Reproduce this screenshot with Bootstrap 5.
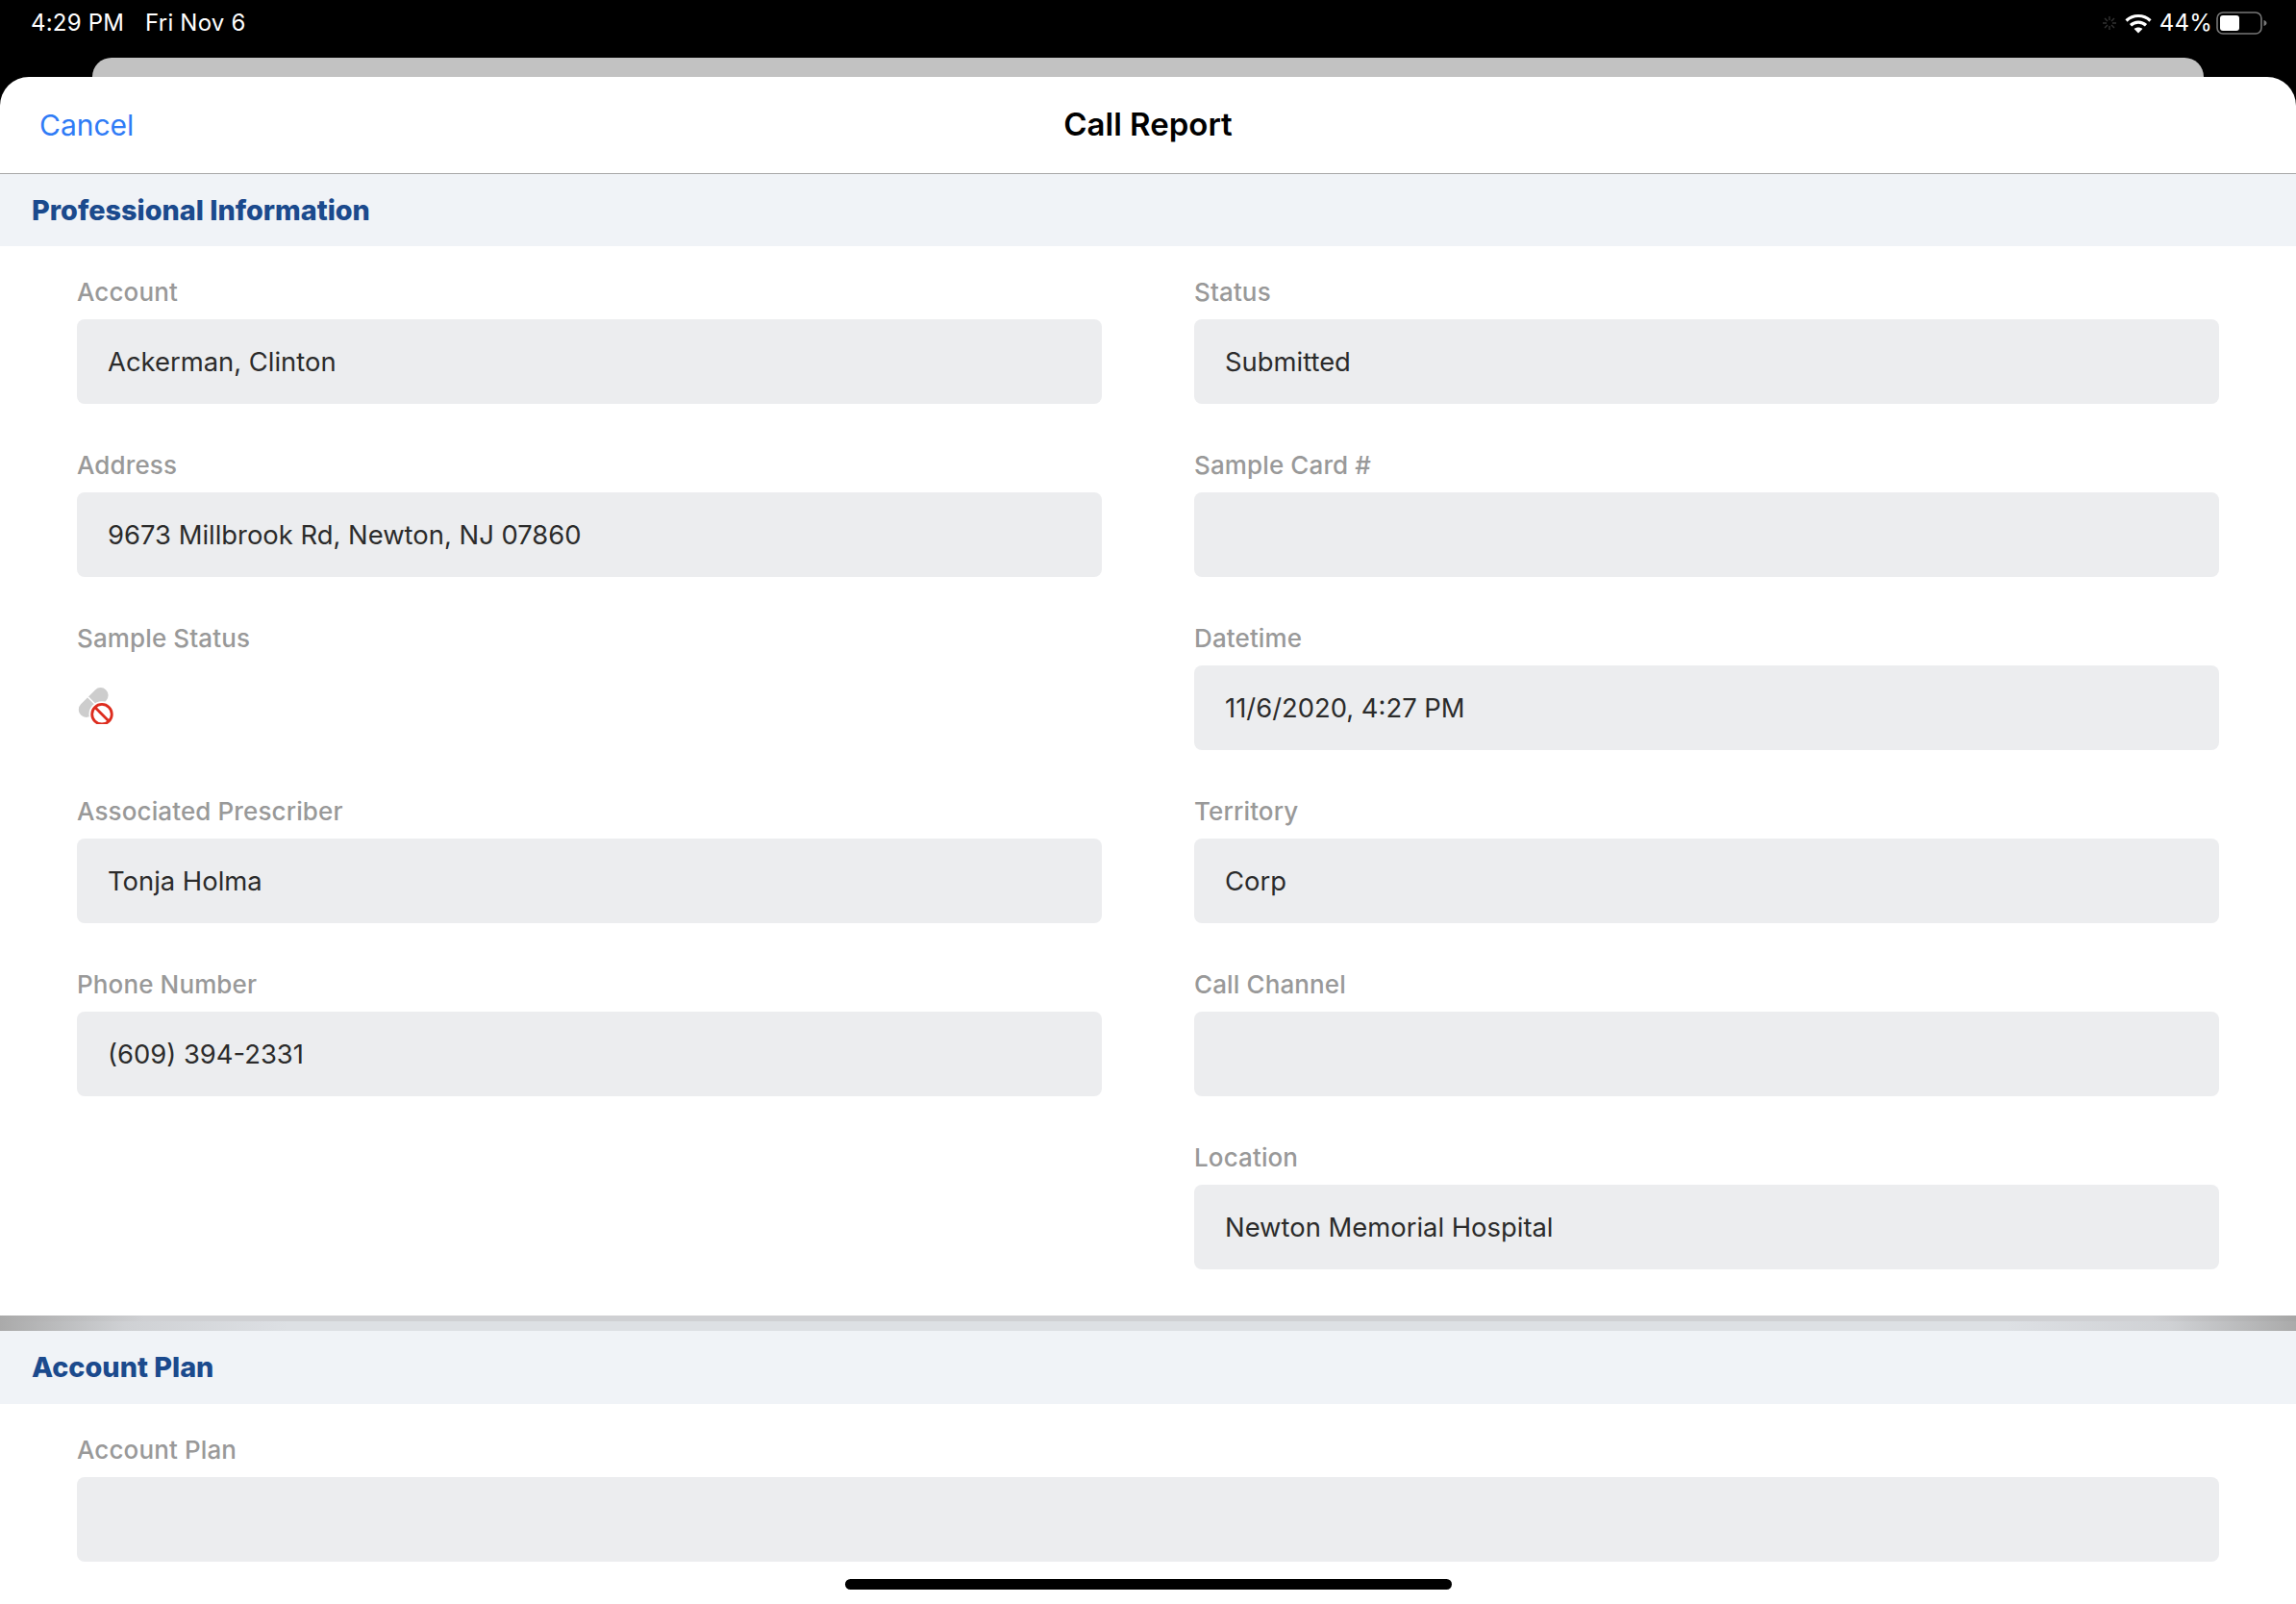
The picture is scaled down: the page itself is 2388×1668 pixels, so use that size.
<!DOCTYPE html>
<html lang="en">
<head>
    <meta charset="UTF-8">
    <meta name="viewport" content="width=device-width, initial-scale=1.0">
    <title>Call Report</title>
    <link href="https://cdn.jsdelivr.net/npm/bootstrap@5.3.2/dist/css/bootstrap.min.css" rel="stylesheet">
    <style>
        html, body { height: 100%; }
        body { background: #000; font-family: Inter, "Liberation Sans", sans-serif; overflow: hidden; position: relative; }
        .status-strip { height: 60px; padding: 0 30px 12px 32px; color: #fff; font-size: 24px; letter-spacing: .2px; }
        .status-strip .clock { margin-right: 22px; }
        .battery-icon { margin-left: 4px; }
        .back-sheet { height: 20px; margin: 0 96px; background: #c2c2c2; border-radius: 20px 20px 0 0; }
        .sheet { background: #fff; border-radius: 30px 30px 0 0; height: 1588px; }
        .sheet-nav { height: 101px; border-bottom: 1px solid #a8a8a8; padding: 0 41px; }
        .sheet-nav .side { flex: 1 1 0; }
        .cancel-link { color: #2f7bf6; font-size: 30px; text-decoration: none; }
        .sheet-title { font-size: 33px; font-weight: 600; color: #000; margin: 0; }
        .sect-head { height: 75px; background: #f0f3f7; color: #1b4a8d; font-size: 28.8px; font-weight: 800; padding-left: 33px; }
        .sect-head.second { height: 76px; }
        .sect-body { padding: 29px 80px 0; }
        .sect-body.first-body { padding-bottom: 3px; }
        .sect-body .row { --bs-gutter-x: 96px; --bs-gutter-y: 0; }
        .info-item { height: 180px; }
        .info-label { display: block; height: 36px; line-height: 37px; margin-bottom: 11px; color: #999; font-size: 26px; font-weight: 500; letter-spacing: .12px; }
        .info-value { height: 88px; padding: 2px 32px 0; border: 0; border-radius: 8px; background: #ecedef; color: #2b2b2b; font-size: 27.4px; line-height: 1; }
        .pill-icon { display: block; width: 40px; height: 40px; margin-top: 32px; }
        .sect-rule { height: 16px; background: linear-gradient(to right, #aaa 0, #cfd1d4 130px, #dde0e4 300px, #dde0e4 2088px, #cfd1d4 2258px, #aaa 100%); }
        .sect-rule::before { content: ""; display: block; height: 6px; background: linear-gradient(to right, #aaa 0, #cfd0d3 150px, #cfd0d3 2238px, #a6a6a6 100%); }
        .home-bar { position: absolute; left: 879px; bottom: 15px; width: 631px; height: 11px; background: #000; border-radius: 6px; }
    </style>
</head>
<body>
    <div class="status-strip d-flex align-items-center justify-content-between">
        <div><span class="clock">4:29 PM</span><span>Fri Nov 6</span></div>
        <div class="d-flex align-items-center">
            <svg width="16" height="16" viewBox="0 0 16 16" class="me-2" stroke="#333" stroke-width="1.4">
                <path d="M8 1v4M8 11v4M1 8h4M11 8h4M3 3l3 3M10 10l3 3M13 3l-3 3M6 10l-3 3"/>
            </svg>
            <svg width="28" height="21" viewBox="0 0 28 21" fill="none" stroke="#fff" stroke-width="3.2" class="me-2">
                <path d="M1.500 7.500C8.500 .8 19.500 .8 26.500 7.500"/>
                <path d="M6 12.200c4.600-4.200 11.400-4.200 16 0"/>
                <path d="M14 20.500l-4.400-4.600c2.600-2 6.200-2 8.800 0z" fill="#fff" stroke="none"/>
            </svg>
            <span>44%</span>
            <svg class="battery-icon" width="53" height="24" viewBox="0 0 53 24">
                <rect x="1" y="1" width="46" height="22" rx="6" fill="none" stroke="#777" stroke-width="1.6"/>
                <rect x="4" y="4" width="20" height="16" rx="3" fill="#fff"/>
                <path d="M49.500 9c2 .6 3 1.600 3 3s-1 2.400-3 3z" fill="#777"/>
            </svg>
        </div>
    </div>
    <div class="back-sheet"></div>

    <div class="sheet overflow-hidden">
        <div class="sheet-nav d-flex align-items-center">
            <div class="side"><a href="#" class="cancel-link">Cancel</a></div>
            <h1 class="sheet-title">Call Report</h1>
            <div class="side"></div>
        </div>

        <div class="sect-head d-flex align-items-center">Professional Information</div>
        <div class="sect-body first-body">
            <div class="row">
                <div class="col-6">
                    <div class="info-item">
                        <label class="info-label">Account</label>
                        <div class="info-value d-flex align-items-center">Ackerman, Clinton</div>
                    </div>
                    <div class="info-item">
                        <label class="info-label">Address</label>
                        <div class="info-value d-flex align-items-center">9673 Millbrook Rd, Newton, NJ 07860</div>
                    </div>
                    <div class="info-item">
                        <label class="info-label">Sample Status</label>
                        <svg class="pill-icon" viewBox="0 0 40 40">
                            <g transform="rotate(-45 17.200 17.500)">
                                <rect x="-1.300" y="9.500" width="37" height="16" rx="8" fill="#cdcdcd"/>
                                <rect x="16.400" y="9" width="1.600" height="17" fill="#fff"/>
                            </g>
                            <circle cx="26" cy="29.700" r="13.500" fill="#fff"/>
                            <circle cx="26" cy="29.700" r="10.300" fill="#fff" stroke="#dd2c1e" stroke-width="2.800"/>
                            <path d="M18.800 22.500l14.400 14.400" stroke="#dd2c1e" stroke-width="2.800"/>
                        </svg>
                    </div>
                    <div class="info-item">
                        <label class="info-label">Associated Prescriber</label>
                        <div class="info-value d-flex align-items-center">Tonja Holma</div>
                    </div>
                    <div class="info-item">
                        <label class="info-label">Phone Number</label>
                        <div class="info-value d-flex align-items-center">(609) 394-2331</div>
                    </div>
                </div>
                <div class="col-6">
                    <div class="info-item">
                        <label class="info-label">Status</label>
                        <div class="info-value d-flex align-items-center">Submitted</div>
                    </div>
                    <div class="info-item">
                        <label class="info-label">Sample Card #</label>
                        <div class="info-value d-flex align-items-center"></div>
                    </div>
                    <div class="info-item">
                        <label class="info-label">Datetime</label>
                        <div class="info-value d-flex align-items-center">11/6/2020, 4:27 PM</div>
                    </div>
                    <div class="info-item">
                        <label class="info-label">Territory</label>
                        <div class="info-value d-flex align-items-center">Corp</div>
                    </div>
                    <div class="info-item">
                        <label class="info-label">Call Channel</label>
                        <div class="info-value d-flex align-items-center"></div>
                    </div>
                    <div class="info-item">
                        <label class="info-label">Location</label>
                        <div class="info-value d-flex align-items-center">Newton Memorial Hospital</div>
                    </div>
                </div>
            </div>
        </div>
        <div class="sect-rule"></div>

        <div class="sect-head second d-flex align-items-center">Account Plan</div>
        <div class="sect-body">
            <label class="info-label">Account Plan</label>
            <div class="info-value"></div>
        </div>
    </div>

    <div class="home-bar"></div>
    <script src="https://cdn.jsdelivr.net/npm/bootstrap@5.3.2/dist/js/bootstrap.bundle.min.js"></script>
</body>
</html>
